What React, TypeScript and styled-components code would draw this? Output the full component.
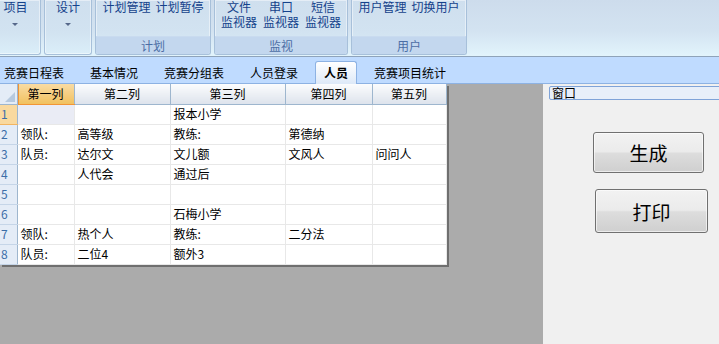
import React from 'react';
import { styled, createGlobalStyle } from 'styled-components';

type RibbonButton = {
  lines: string[]
  caret?: boolean
}

type RibbonGroupData = {
  label?: string
  width: number
  offset?: number
  gap: number
  buttons: RibbonButton[]
}

const groups: RibbonGroupData[] = [
  { width: 51, offset: -10, gap: 0, buttons: [{ lines: ['项目'], caret: true }] },
  { width: 48, gap: 0, buttons: [{ lines: ['设计'], caret: true }] },
  { label: '计划', width: 116, gap: 5, buttons: [{ lines: ['计划管理'] }, { lines: ['计划暂停'] }] },
  {
    label: '监视',
    width: 134,
    gap: 6,
    buttons: [{ lines: ['文件', '监视器'] }, { lines: ['串口', '监视器'] }, { lines: ['短信', '监视器'] }],
  },
  { label: '用户', width: 116, gap: 5, buttons: [{ lines: ['用户管理'] }, { lines: ['切换用户'] }] },
]

const tabs = ['竞赛日程表', '基本情况', '竞赛分组表', '人员登录', '人员', '竞赛项目统计']
const activeTab = '人员'

const columns = [
  { title: '第一列', width: 57 },
  { title: '第二列', width: 96 },
  { title: '第三列', width: 115 },
  { title: '第四列', width: 87 },
  { title: '第五列', width: 74 },
]

const rows: string[][] = [
  ['', '', '报本小学', '', ''],
  ['领队:', '高等级', '教练:', '第德纳', ''],
  ['队员:', '达尔文', '文儿额', '文风人', '问问人'],
  ['', '人代会', '通过后', '', ''],
  ['', '', '', '', ''],
  ['', '', '石梅小学', '', ''],
  ['领队:', '热个人', '教练:', '二分法', ''],
  ['队员:', '二位4', '额外3', '', ''],
]

function App() {
  return (
    <Page>
      <GlobalStyle />
      <Ribbon>
        {groups.map((group, gi) => (
          <Group key={gi} $width={group.width} $offset={group.offset ?? 0}>
            <GroupBody $gap={group.gap}>
              {group.buttons.map((button, bi) => (
                <BigButton key={bi}>
                  {button.lines.map((line) => (
                    <ButtonLine key={line}>{line}</ButtonLine>
                  ))}
                  {button.caret && <Caret />}
                </BigButton>
              ))}
            </GroupBody>
            {group.label && <GroupLabel>{group.label}</GroupLabel>}
          </Group>
        ))}
      </Ribbon>
      <TabStrip>
        {tabs.map((tab) => (
          <Tab key={tab} $active={tab === activeTab}>
            {tab}
          </Tab>
        ))}
      </TabStrip>
      <Main>
        <GridArea>
          <Grid>
            <colgroup>
              <col style={{ width: 17 }} />
              {columns.map((c) => (
                <col key={c.title} style={{ width: c.width }} />
              ))}
            </colgroup>
            <thead>
              <tr>
                <Corner>
                  <CornerMark />
                </Corner>
                {columns.map((c, ci) => (
                  <ColHeader key={c.title} $selected={ci === 0}>
                    {c.title}
                  </ColHeader>
                ))}
              </tr>
            </thead>
            <tbody>
              {rows.map((row, ri) => (
                <tr key={ri}>
                  <RowHeader $selected={ri === 0}>{ri + 1}</RowHeader>
                  {row.map((cell, ci) => (
                    <Cell key={ci} $selected={ri === 0 && ci === 0}>
                      {cell}
                    </Cell>
                  ))}
                </tr>
              ))}
            </tbody>
          </Grid>
        </GridArea>
        <SidePanel>
          <WindowField>窗口</WindowField>
          <ActionButton $left={50} $top={32} $width={111} $height={41}>
            生成
          </ActionButton>
          <ActionButton $left={52} $top={16} $width={113} $height={44}>
            打印
          </ActionButton>
        </SidePanel>
      </Main>
    </Page>
  )
}

export default App

const GlobalStyle = createGlobalStyle`
  html, body {
    margin: 0;
    padding: 0;
    background: #ababab;
  }
  body {
    font-family: "Noto Sans CJK SC", "DejaVu Sans", sans-serif;
    font-size: 12px;
  }
`

const Page = styled.div`
  width: 719px;
  height: 344px;
  display: flex;
  flex-direction: column;
  overflow: hidden;
`

const Ribbon = styled.div`
  height: 57px;
  box-sizing: border-box;
  flex-shrink: 0;
  display: flex;
  gap: 3px;
  align-items: flex-start;
  background: linear-gradient(#cddcec 0%, #d3e3f1 55%, #e2f4fc 100%);
  border-bottom: 1px solid #8fa3b9;
`

const Group = styled.div<{ $width: number; $offset: number }>`
  width: ${(p) => p.$width}px;
  margin-left: ${(p) => p.$offset}px;
  height: 55px;
  box-sizing: border-box;
  display: flex;
  flex-direction: column;
  border: 1px solid #a7c0da;
  border-top: none;
  border-radius: 0 0 3px 3px;
  box-shadow: inset 0 0 0 1px rgba(255, 255, 255, 0.45);
  background: linear-gradient(#cfdfee 0%, #d2e3f1 60%, #dbeef9 100%);
  overflow: hidden;
`

const GroupBody = styled.div<{ $gap: number }>`
  flex: 1;
  display: flex;
  justify-content: center;
  gap: ${(p) => p.$gap}px;
`

const BigButton = styled.div`
  display: flex;
  flex-direction: column;
  align-items: center;
  gap: 2px;
  color: #15428b;
  white-space: nowrap;
`

const ButtonLine = styled.span`
  display: block;
  height: 13px;
  line-height: 13px;
`

const Caret = styled.div`
  margin-top: 8px;
  width: 0;
  height: 0;
  border-left: 3px solid transparent;
  border-right: 3px solid transparent;
  border-top: 3px solid #56688a;
`

const GroupLabel = styled.div`
  height: 17px;
  line-height: 17px;
  text-align: center;
  color: #4c6ea5;
  background: #c3d7ee;
  border-top: 1px solid #c9dbef;
`

const TabStrip = styled.div`
  height: 27px;
  box-sizing: border-box;
  flex-shrink: 0;
  display: flex;
  align-items: flex-end;
  gap: 8px;
  margin-left: -5px;
  background: #bfdbff;
  border-bottom: 1px solid #8db2e3;
`

const Tab = styled.div<{ $active: boolean }>`
  height: 23px;
  line-height: 21px;
  padding: 0 8px;
  margin-bottom: -1px;
  box-sizing: border-box;
  color: #000;
  white-space: nowrap;
  font-weight: ${(p) => (p.$active ? 700 : 400)};
  border: 1px solid ${(p) => (p.$active ? '#8db2e3' : 'transparent')};
  border-bottom: none;
  border-radius: 3px 3px 0 0;
  background: ${(p) => (p.$active ? 'linear-gradient(#ffffff, #dde9f8)' : 'transparent')};
`

const Main = styled.div`
  flex: 1;
  display: flex;
`

const GridArea = styled.div`
  width: 543px;
  background: #ababab;
`

const Grid = styled.table`
  border-collapse: collapse;
  table-layout: fixed;
  width: 446px;
  background: #fff;
  box-shadow: 2px 2px 0 #6f6f6f;

  td, th {
    height: 20px;
    padding: 0;
    box-sizing: border-box;
    font-weight: 400;
    line-height: 18px;
    white-space: nowrap;
    overflow: hidden;
  }
`

const Corner = styled.th`
  position: relative;
  background: #e4ecf7;
  border-right: 1px solid #9eb6ce;
  border-bottom: 1px solid #9eb6ce;
`

const CornerMark = styled.div`
  position: absolute;
  right: 2px;
  bottom: 2px;
  width: 0;
  height: 0;
  border-left: 10px solid transparent;
  border-bottom: 10px solid #b6c9df;
`

const ColHeader = styled.th<{ $selected: boolean }>`
  text-align: center;
  color: #000;
  background: ${(p) =>
    p.$selected ? 'linear-gradient(#f9dba3, #f1c15f)' : 'linear-gradient(#fbfcfd, #dde3ec)'};
  border-right: 1px solid #9eb6ce;
  border-bottom: 1px solid ${(p) => (p.$selected ? '#f29536' : '#9eb6ce')};
  box-shadow: ${(p) => (p.$selected ? 'inset 1px 0 0 #f29536' : 'none')};
`

const RowHeader = styled.td<{ $selected: boolean }>`
  color: #3c6ea8;
  padding-left: 1px !important;
  background: ${(p) => (p.$selected ? '#f9d99f' : '#e4ecf7')};
  border-right: 1px solid #9eb6ce;
  border-bottom: 1px solid ${(p) => (p.$selected ? '#f2b561' : '#c5d5e8')};
`

const Cell = styled.td<{ $selected: boolean }>`
  padding-left: 3px !important;
  color: #000;
  background: ${(p) => (p.$selected ? '#eaecf5' : '#fff')};
  border-right: 1px solid #e8e8e8;
  border-bottom: 1px solid #e8e8e8;
`

const SidePanel = styled.div`
  flex: 1;
  display: flex;
  flex-direction: column;
  align-items: flex-start;
  background: #f0f0f0;
  padding: 2px 0 0 6px;
`

const WindowField = styled.div`
  align-self: stretch;
  height: 14px;
  line-height: 12px;
  box-sizing: border-box;
  padding-left: 2px;
  margin-right: -3px;
  color: #000;
  background: #e8eff9;
  border: 1px solid #7fa3d8;
  border-radius: 2px;
`

const ActionButton = styled.button<{ $left: number; $top: number; $width: number; $height: number }>`
  margin-left: ${(p) => p.$left - 6}px;
  margin-top: ${(p) => p.$top}px;
  width: ${(p) => p.$width}px;
  height: ${(p) => p.$height}px;
  font-family: "Noto Sans CJK SC", sans-serif;
  font-size: 19px;
  color: #000;
  border: 1px solid #707070;
  border-radius: 3px;
  background: linear-gradient(#f2f2f2 0%, #ebebeb 48%, #dddddd 52%, #cfcfcf 100%);
  padding: 0;
  box-shadow: inset 0 0 0 1px rgba(255, 255, 255, 0.6);
`
